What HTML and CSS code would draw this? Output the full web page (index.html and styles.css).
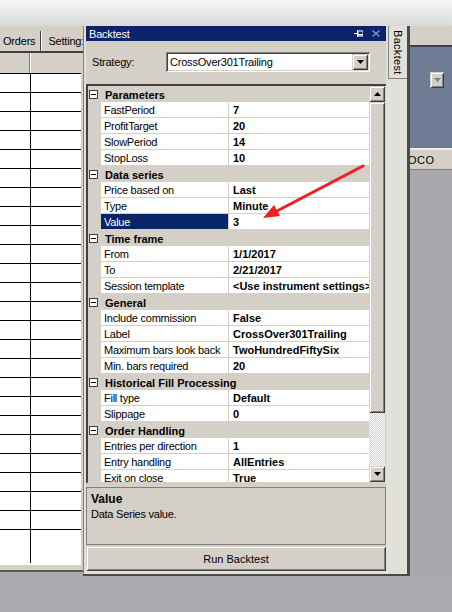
FILE: index.html
```html
<!DOCTYPE html>
<html>
<head>
<meta charset="utf-8">
<link rel="stylesheet" href="styles.css">
</head>
<body>
<div class="screen">
  <div class="topbar"></div>
  <div class="main">
    <div class="leftwin">
      <div class="ltabs"><span class="ltab">Orders</span><span class="ltab-sep"></span><span class="ltab">Setting:</span></div>
      <div class="lhead"><div class="lh1"></div><div class="lh2"></div></div>
      <div class="lgrid">
        <div class="lrow"><div class="lc1"></div><div class="lc2"></div></div>
        <div class="lrow"><div class="lc1"></div><div class="lc2"></div></div>
        <div class="lrow"><div class="lc1"></div><div class="lc2"></div></div>
        <div class="lrow"><div class="lc1"></div><div class="lc2"></div></div>
        <div class="lrow"><div class="lc1"></div><div class="lc2"></div></div>
        <div class="lrow"><div class="lc1"></div><div class="lc2"></div></div>
        <div class="lrow"><div class="lc1"></div><div class="lc2"></div></div>
        <div class="lrow"><div class="lc1"></div><div class="lc2"></div></div>
        <div class="lrow"><div class="lc1"></div><div class="lc2"></div></div>
        <div class="lrow"><div class="lc1"></div><div class="lc2"></div></div>
        <div class="lrow"><div class="lc1"></div><div class="lc2"></div></div>
        <div class="lrow"><div class="lc1"></div><div class="lc2"></div></div>
        <div class="lrow"><div class="lc1"></div><div class="lc2"></div></div>
        <div class="lrow"><div class="lc1"></div><div class="lc2"></div></div>
        <div class="lrow"><div class="lc1"></div><div class="lc2"></div></div>
        <div class="lrow"><div class="lc1"></div><div class="lc2"></div></div>
        <div class="lrow"><div class="lc1"></div><div class="lc2"></div></div>
        <div class="lrow"><div class="lc1"></div><div class="lc2"></div></div>
        <div class="lrow"><div class="lc1"></div><div class="lc2"></div></div>
        <div class="lrow"><div class="lc1"></div><div class="lc2"></div></div>
        <div class="lrow"><div class="lc1"></div><div class="lc2"></div></div>
        <div class="lrow"><div class="lc1"></div><div class="lc2"></div></div>
        <div class="lrow"><div class="lc1"></div><div class="lc2"></div></div>
        <div class="lrow"><div class="lc1"></div><div class="lc2"></div></div>
        <div class="lrow last"><div class="lc1"></div><div class="lc2"></div></div>
      </div>
      <div class="lfoot"></div>
    </div>

    <div class="dock">
      <div class="panel">
        <div class="title">
          <span class="title-text">Backtest</span>
          <svg class="pin" width="9" height="7" viewBox="0 0 9 7"><path d="M0 3.5H3M3.5 0V7" stroke="#fff" stroke-width="1"/><rect x="4" y="1" width="5" height="5" fill="none" stroke="#fff" stroke-width="1"/><rect x="4" y="4" width="5" height="1.5" fill="#fff"/></svg>
          <svg class="close" width="8" height="7" viewBox="0 0 8 7"><path d="M0.5 0.5L7.5 6.5M7.5 0.5L0.5 6.5" stroke="#8d9abb" stroke-width="1.2"/></svg>
        </div>
        <div class="strat">
          <span class="strat-label">Strategy:</span>
          <div class="combo">
            <span class="combo-text">CrossOver301Trailing</span>
            <div class="combo-btn raised"><svg width="7" height="4" viewBox="0 0 7 4"><path d="M0 0H7L3.5 4Z" fill="#000"/></svg></div>
          </div>
        </div>
        <div class="pg">
          <div class="pg-rows">
            <div class="cat"><span class="tog"></span><span class="cat-name">Parameters</span></div>
            <div class="prop"><span class="pm"></span><span class="pn">FastPeriod</span><span class="pv">7</span></div>
            <div class="prop"><span class="pm"></span><span class="pn">ProfitTarget</span><span class="pv">20</span></div>
            <div class="prop"><span class="pm"></span><span class="pn">SlowPeriod</span><span class="pv">14</span></div>
            <div class="prop"><span class="pm"></span><span class="pn">StopLoss</span><span class="pv">10</span></div>
            <div class="cat"><span class="tog"></span><span class="cat-name">Data series</span></div>
            <div class="prop"><span class="pm"></span><span class="pn">Price based on</span><span class="pv">Last</span></div>
            <div class="prop"><span class="pm"></span><span class="pn">Type</span><span class="pv">Minute</span></div>
            <div class="prop sel"><span class="pm"></span><span class="pn">Value</span><span class="pv">3</span></div>
            <div class="cat"><span class="tog"></span><span class="cat-name">Time frame</span></div>
            <div class="prop"><span class="pm"></span><span class="pn">From</span><span class="pv">1/1/2017</span></div>
            <div class="prop"><span class="pm"></span><span class="pn">To</span><span class="pv">2/21/2017</span></div>
            <div class="prop"><span class="pm"></span><span class="pn">Session template</span><span class="pv">&lt;Use instrument settings&gt;</span></div>
            <div class="cat"><span class="tog"></span><span class="cat-name">General</span></div>
            <div class="prop"><span class="pm"></span><span class="pn">Include commission</span><span class="pv">False</span></div>
            <div class="prop"><span class="pm"></span><span class="pn">Label</span><span class="pv">CrossOver301Trailing</span></div>
            <div class="prop"><span class="pm"></span><span class="pn">Maximum bars look back</span><span class="pv">TwoHundredFiftySix</span></div>
            <div class="prop"><span class="pm"></span><span class="pn">Min. bars required</span><span class="pv">20</span></div>
            <div class="cat"><span class="tog"></span><span class="cat-name">Historical Fill Processing</span></div>
            <div class="prop"><span class="pm"></span><span class="pn">Fill type</span><span class="pv">Default</span></div>
            <div class="prop"><span class="pm"></span><span class="pn">Slippage</span><span class="pv">0</span></div>
            <div class="cat"><span class="tog"></span><span class="cat-name">Order Handling</span></div>
            <div class="prop"><span class="pm"></span><span class="pn">Entries per direction</span><span class="pv">1</span></div>
            <div class="prop"><span class="pm"></span><span class="pn">Entry handling</span><span class="pv">AllEntries</span></div>
            <div class="prop"><span class="pm"></span><span class="pn">Exit on close</span><span class="pv">True</span></div>
          </div>
          <div class="vscroll">
            <div class="sbtn raised"><svg width="7" height="4" viewBox="0 0 7 4"><path d="M0 4H7L3.5 0Z" fill="#000"/></svg></div>
            <div class="thumb raised"></div>
            <div class="track"></div>
            <div class="sbtn raised"><svg width="7" height="4" viewBox="0 0 7 4"><path d="M0 0H7L3.5 4Z" fill="#000"/></svg></div>
          </div>
        </div>
        <div class="desc">
          <span class="desc-title">Value</span>
          <span class="desc-text">Data Series value.</span>
        </div>
        <div class="run raised">Run Backtest</div>
      </div>
      <div class="tabstrip"><div class="vtab">Backtest</div></div>
    </div>

    <div class="rightwin">
      <div class="rw-top"></div>
      <div class="rw-blue"><div class="rw-combo raised"><svg width="7" height="4" viewBox="0 0 7 4"><path d="M0 0H7L3.5 4Z" fill="#808080"/></svg></div></div>
      <div class="rw-head"><span class="rw-oco">OCO</span></div>
      <div class="rw-body"></div>
    </div>
  </div>
  <div class="bottom"></div>

  <svg class="arrow" width="452" height="612" viewBox="0 0 452 612">
    <line x1="363" y1="166" x2="275" y2="212" stroke="#f21d1d" stroke-width="3" stroke-linecap="round"/>
    <polygon points="263,218 274,205 280,216" fill="#f21d1d"/>
  </svg>
</div>
</body>
</html>
```

FILE: styles.css
```css
* { box-sizing: border-box; }
body {
  margin: 0;
  background: #abaaae;
  font-family: "Liberation Sans", Arial, sans-serif;
  font-size: 11px;
  color: #000;
}
.screen {
  position: relative;
  width: 452px;
  height: 612px;
  overflow: hidden;
  display: flex;
  flex-direction: column;
  background: #abaaae;
}
.topbar {
  flex: none;
  height: 26px;
  background: linear-gradient(#f8f8f8, #d9d9d9);
}
.main {
  flex: none;
  height: 550px;
  display: flex;
}
.bottom { flex: 1; background: #abaaae; }

.raised {
  background: #d4d0c8;
  box-shadow: inset 1px 1px #d4d0c8, inset -1px -1px #404040, inset 2px 2px #fff, inset -2px -2px #808080;
}

/* left window */
.leftwin {
  flex: none;
  width: 83px;
  display: flex;
  flex-direction: column;
  background: #d4d0c8;
  border-bottom: 2px solid #5a5a5a;
  height: 546px;
}
.ltabs {
  flex: none;
  height: 27px;
  display: flex;
  align-items: center;
  padding-top: 5px;
  border-bottom: 2px solid #404040;
  white-space: nowrap;
  overflow: hidden;
  letter-spacing: -0.2px;
}
.ltab { padding: 0 5px 0 3px; }
.ltab-sep {
  width: 2px;
  height: 20px;
  border-left: 1px solid #404040;
  border-right: 1px solid #fff;
  margin-right: 3px;
}
.lhead {
  flex: none;
  display: flex;
  height: 21px;
  border-bottom: 1px solid #000;
  width: 81px;
}
.lh1 { width: 31px; border-right: 1px solid #fff; box-shadow: inset -1px 0 #808080; }
.lh2 { flex: 1; }
.lgrid {
  flex: none;
  height: 490px;
  width: 81px;
  background: #fff;
  overflow: hidden;
}
.lrow {
  display: flex;
  height: 19px;
  border-bottom: 1px solid #000;
}
.lrow.last { height: 33px; border-bottom: none; }
.lc1 { width: 31px; border-right: 1px solid #000; }
.lc2 { flex: 1; }
.lfoot {
  flex: 1;
  width: 81px;
  border-top: 1px solid #fff;
}

/* dock */
.dock {
  flex: none;
  width: 327px;
  display: flex;
  background: #e1e0d9;
  padding: 0 0 3px 3px;
  border-right: 3px solid #4a4a4a;
  border-bottom: 2px solid #4a4a4a;
  box-shadow: inset 1px 0 #808080;
}
.panel {
  flex: none;
  width: 300px;
  display: flex;
  flex-direction: column;
  background: #d4d0c8;
}
.title {
  flex: none;
  height: 15px;
  background: #0a246a;
  color: #fff;
  display: flex;
  align-items: center;
  padding: 0 5px 0 3px;
  letter-spacing: -0.2px;
}
.title-text { flex: 1; }
.pin { margin-right: 9px; }
.close { margin-right: 1px; }

.strat {
  flex: none;
  height: 43px;
  display: flex;
  align-items: center;
  padding: 0 16px 2px 6px;
}
.strat-label { width: 74px; letter-spacing: -0.2px; }
.combo {
  flex: 1;
  height: 20px;
  background: #fff;
  display: flex;
  align-items: center;
  box-shadow: inset 1px 1px #808080, inset -1px -1px #fff, inset 2px 2px #404040, inset -2px -2px #d4d0c8;
  padding: 2px 2px 2px 4px;
}
.combo-text { flex: 1; letter-spacing: -0.2px; }
.combo-btn {
  width: 16px;
  height: 16px;
  display: flex;
  align-items: center;
  justify-content: center;
}

/* property grid */
.pg {
  flex: none;
  height: 400px;
  display: flex;
  border-top: 2px solid #404040;
  border-left: 2px solid #404040;
  border-bottom: 2px solid #d4d0c8;
  box-shadow: inset 0 -1px #fff;
  overflow: hidden;
}
.pg-rows {
  flex: none;
  width: 281px;
  overflow: hidden;
}
.cat, .prop {
  display: flex;
  height: 16px;
  align-items: stretch;
}
.cat {
  background: #d4d0c8;
  font-weight: bold;
  align-items: center;
  padding-top: 1px;
}
.tog {
  flex: none;
  width: 9px;
  height: 9px;
  margin: 0 4px 0 1px;
  border: 1px solid #404040;
  background: #fff linear-gradient(#000, #000) no-repeat center / 5px 1px;
}
.cat-name { padding-left: 3px; white-space: nowrap; }
.pm { flex: none; width: 13px; background: #d4d0c8; }
.pn {
  flex: none;
  width: 128px;
  background: #fff;
  border-right: 1px solid #d4d0c8;
  border-bottom: 1px solid #d4d0c8;
  padding: 2px 0 0 3px;
  white-space: nowrap;
  overflow: hidden;
  letter-spacing: -0.25px;
}
.pv {
  flex: 1;
  background: #fff;
  border-bottom: 1px solid #d4d0c8;
  padding: 2px 0 0 4px;
  font-weight: bold;
  white-space: nowrap;
  overflow: hidden;
}
.sel .pn { background: #0a246a; color: #fff; }

.vscroll {
  flex: none;
  width: 16px;
  display: flex;
  flex-direction: column;
}
.sbtn {
  flex: none;
  height: 16px;
  display: flex;
  align-items: center;
  justify-content: center;
}
.thumb { flex: none; height: 311px; }
.track {
  flex: 1;
  background: repeating-conic-gradient(#d4d0c8 0 25%, #fff 0 50%) 0 0 / 2px 2px;
}

.desc {
  flex: none;
  height: 58px;
  margin-top: 3px;
  border: 1px solid #808080;
  padding: 4px 0 0 4px;
  display: flex;
  flex-direction: column;
}
.desc-title { font-weight: bold; font-size: 12px; line-height: 15px; }
.desc-text { letter-spacing: -0.25px; line-height: 15px; }
.run {
  flex: none;
  height: 25px;
  margin-top: 1px;
  display: flex;
  align-items: center;
  justify-content: center;
  font-size: 11px;
}

.tabstrip {
  flex: none;
  width: 21px;
  padding-left: 2px;
}
.vtab {
  writing-mode: vertical-rl;
  height: 53px;
  width: 19px;
  border: 1px solid #808080;
  border-top: none;
  border-right: none;
  display: flex;
  align-items: center;
  justify-content: center;
  font-size: 11px;
  letter-spacing: 0.3px;
  background: #e1e0d9;
}

/* right window */
.rightwin {
  flex: none;
  width: 42px;
  display: flex;
  flex-direction: column;
}
.rw-top {
  flex: none;
  height: 21px;
  background: #d4d0c8;
  border-bottom: 2px solid #404040;
}
.rw-blue {
  flex: none;
  height: 101px;
  background: #6f7c96;
  padding: 25px 0 0 20px;
}
.rw-combo {
  width: 14px;
  height: 16px;
  display: flex;
  align-items: center;
  justify-content: center;
}
.rw-head {
  flex: none;
  height: 22px;
  background: #d4d0c8;
  border-top: 2px solid #f0f0f0;
  border-bottom: 1px solid #808080;
  display: flex;
  align-items: center;
  overflow: hidden;
  white-space: nowrap;
}
.rw-oco { margin-left: -2px; letter-spacing: 0.5px; }
.rw-body { flex: 1; background: #a9a8ac; }

.arrow {
  position: absolute;
  left: 0;
  top: 0;
  pointer-events: none;
}
```
